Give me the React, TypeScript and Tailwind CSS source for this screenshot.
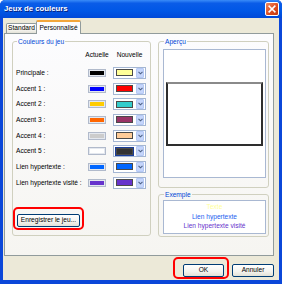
import React from "react";

const rows = [
  { label: "Principale :", cur: "bg-[#000000]", next: "bg-[#ffff99]", focus: false },
  { label: "Accent 1 :", cur: "bg-[#0000ff]", next: "bg-[#ff0000]", focus: false },
  { label: "Accent 2 :", cur: "bg-[#ffcc00]", next: "bg-[#33cccc]", focus: false },
  { label: "Accent 3 :", cur: "bg-[#ff6600]", next: "bg-[#993366]", focus: false },
  { label: "Accent 4 :", cur: "bg-[#cccccc]", next: "bg-[#ffcc99]", focus: false },
  { label: "Accent 5 :", cur: "bg-[#ffffff]", next: "bg-[#333333]", focus: true },
  { label: "Lien hypertexte :", cur: "bg-[#0066ff]", next: "bg-[#0066ff]", focus: false },
  { label: "Lien hypertexte visité :", cur: "bg-[#6633cc]", next: "bg-[#6633cc]", focus: false },
];

function XPButton({ label, w }: { label: string; w: string }) {
  return (
    <div
      className={`${w} h-[13px] border border-[#003c74] rounded-[2px] bg-[linear-gradient(to_bottom,#ffffff,#f4f3ee_60%,#e3e1d6)] flex items-center justify-center leading-none whitespace-nowrap`}
    >
      {label}
    </div>
  );
}

export default function App() {
  return (
    <div className="w-[282px] h-[284px] bg-[#0b47d9] flex flex-col font-['Liberation_Sans',Arial,sans-serif] text-[6.6px] text-black overflow-hidden rounded-t-[5px]">
      {/* Title bar */}
      <div className="h-[18px] shrink-0 flex items-center justify-between bg-[linear-gradient(to_bottom,#3a8cf8_0%,#0a5ce8_18%,#0057e6_60%,#0049d8_100%)] rounded-t-[5px] pl-[4px] pr-[3px]">
        <span className="text-white font-bold text-[7.8px] leading-none [text-shadow:1px_1px_0_#0a1f7a]">
          Jeux de couleurs
        </span>
        <div className="w-[14px] h-[14px] rounded-[2px] border border-white bg-[linear-gradient(135deg,#f0875f,#dc4a1d_60%,#c03a12)] flex items-center justify-center">
          <svg width="8" height="8" viewBox="0 0 8 8">
            <path d="M1.2 1.2 L6.8 6.8 M6.8 1.2 L1.2 6.8" stroke="white" strokeWidth="1.6" strokeLinecap="square" />
          </svg>
        </div>
      </div>

      {/* Body */}
      <div className="flex-1 mx-[3px] mb-[4px] bg-[#ece9d8] flex flex-col">
        {/* Tabs */}
        <div className="h-[15px] shrink-0 flex items-end pl-[3px]">
          <div className="w-[31px] h-[10px] border border-b-0 border-[#919b9c] rounded-t-[2px] bg-[linear-gradient(to_bottom,#ffffff,#f3f2ec_70%,#e4e2d8)] flex items-center justify-center leading-none whitespace-nowrap">
            Standard
          </div>
          <div className="relative z-10 w-[45px] h-[14px] mb-[-1px] -ml-[1px] border border-b-0 border-[#919b9c] border-t-[2px] border-t-[#f3a63b] rounded-t-[2px] bg-[#fcfcfe] flex items-center justify-center leading-none whitespace-nowrap">
            Personnalisé
          </div>
        </div>

        {/* Panel */}
        <div className="h-[223px] shrink-0 ml-[1px] mr-[5px] border border-[#919b9c] bg-[linear-gradient(to_bottom,#fcfcfe,#f6f5f1)] flex gap-[7px] pl-[7px] pr-[4px] pt-[3px]">
          {/* Couleurs du jeu */}
          <fieldset className="w-[139px] h-[199px] border border-[#d0d0bf] rounded-[3px] px-[3px] m-0">
            <legend className="ml-[1px] px-[1px] text-[#0046d5] leading-[9px]">Couleurs du jeu</legend>
            <div className="h-[189px] flex flex-col">
              <div className="h-[10px] mt-[4px] flex items-center">
                <div className="w-[72px]" />
                <div className="w-[18px] flex justify-center whitespace-nowrap">Actuelle</div>
                <div className="w-[33px] ml-[7px] flex justify-center whitespace-nowrap">Nouvelle</div>
              </div>
              <div className="mt-[5px] flex flex-col">
                {rows.map((r) => (
                  <div key={r.label} className="h-[15.7px] flex items-center">
                    <div className="w-[72px] whitespace-nowrap">{r.label}</div>
                    <div className="w-[18px] h-[8px] border border-[#b1bacb] bg-[#e4e8ef] p-[1px]">
                      <div className={`w-full h-full ${r.cur}`} />
                    </div>
                    <div className="w-[33px] h-[12px] ml-[7px] border border-[#a4b6d3] bg-white flex items-center pl-[2px] pr-[1px]">
                      <div
                        className={`w-[17px] h-[7px] border border-[#4a4a4a] ${r.next} ${
                          r.focus ? "outline-1 outline-[#1a3d9a]" : ""
                        }`}
                      />
                      <div className="ml-auto w-[8px] h-[10px] rounded-[1px] bg-[#c5d5fb] border border-[#b4c8f4] flex items-center justify-center">
                        <svg width="5" height="4" viewBox="0 0 5 4">
                          <path d="M0.5 0.8 L2.5 2.8 L4.5 0.8" stroke="#4d6185" strokeWidth="1.1" fill="none" />
                        </svg>
                      </div>
                    </div>
                  </div>
                ))}
              </div>
              <div className="flex-1" />
              <div className="w-[71px] h-[23px] -ml-[3px] mb-[5px] border-[2px] border-[#ff0000] rounded-[5px] pl-[2px] pt-[5px]">
                <XPButton label="Enregistrer le jeu..." w="w-[63px]" />
              </div>
            </div>
          </fieldset>

          {/* Right column */}
          <div className="flex flex-col gap-[2px]">
            <fieldset className="w-[111px] h-[151px] border border-[#d0d0bf] rounded-[3px] pl-[4px] pr-[2px] m-0">
              <legend className="ml-[1px] px-[1px] text-[#0046d5] leading-[9px]">Aperçu</legend>
              <div className="mt-[3px] h-[129px] border border-[#a9b8d2] bg-white px-[2px] pt-[32px]">
                <div className="h-[64px] border-2 border-[#2e2e2e] border-t-[#8a8a8a] bg-white" />
              </div>
            </fieldset>
            <fieldset className="w-[111px] h-[47px] border border-[#d0d0bf] rounded-[3px] pl-[4px] pr-[2px] m-0">
              <legend className="ml-[1px] px-[1px] text-[#0046d5] leading-[9px]">Exemple</legend>
              <div className="mt-[1px] h-[34px] border border-[#a9b8d2] bg-white pt-[1px] flex flex-col items-center leading-[9.5px] whitespace-nowrap">
                <span className="text-[#ffff99]">Texte</span>
                <span className="text-[#1c5ef0]">Lien hypertexte</span>
                <span className="text-[#6633cc]">Lien hypertexte visité</span>
              </div>
            </fieldset>
          </div>
        </div>

        {/* Buttons */}
        <div className="mt-[1px] flex justify-end items-start pr-[5px] gap-[3px]">
          <div className="w-[56px] h-[22px] border-[2px] border-[#ff0000] rounded-[5px] pl-[8px] pt-[5px]">
            <XPButton label="OK" w="w-[41px]" />
          </div>
          <div className="pt-[7px]">
            <XPButton label="Annuler" w="w-[42px]" />
          </div>
        </div>
      </div>
    </div>
  );
}
